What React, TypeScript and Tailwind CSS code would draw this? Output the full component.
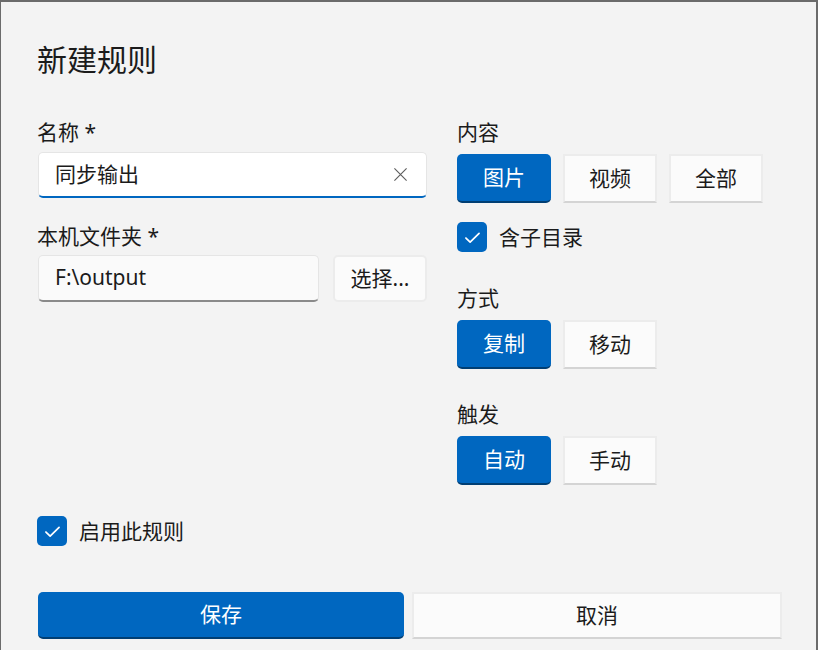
import { useState } from "react";

const font = "font-['Segoe_UI','Noto_Sans','Noto_Sans_CJK_SC',sans-serif]";

function Check() {
  return (
    <svg className="w-[21px] h-[21px]" viewBox="0 0 16 16" fill="none" stroke="white" strokeWidth={1.3}>
      <path strokeLinecap="round" strokeLinejoin="round" d="M3 8.4l3.2 3.1L13 4.9" />
    </svg>
  );
}

function CheckBox({ label, checked, onToggle }: { label: string; checked: boolean; onToggle: () => void }) {
  return (
    <button onClick={onToggle} className="flex items-center gap-3 text-left">
      <span
        className={`w-[30px] h-[30px] rounded-[5px] flex items-center justify-center ${
          checked ? "bg-[#0067c0]" : "bg-white border border-[#8a8a8a]"
        }`}
      >
        {checked && <Check />}
      </span>
      <span className="text-[21px] leading-[30px] text-[#1b1b1b]">{label}</span>
    </button>
  );
}

function Segment({ items, value, onChange }: { items: string[]; value: string; onChange: (v: string) => void }) {
  return (
    <div className="flex gap-[12px]">
      {items.map((it) =>
        it === value ? (
          <button
            key={it}
            onClick={() => onChange(it)}
            className="w-[94px] h-[49px] rounded-[5px] bg-[#0067c0] border-b-2 border-[#003e73] text-white text-[21px]"
          >
            {it}
          </button>
        ) : (
          <button
            key={it}
            onClick={() => onChange(it)}
            className="w-[94px] h-[49px] bg-[#fbfbfb] border-2 border-[#ececec] border-b-[#d4d4d4] text-[#1b1b1b] text-[21px]"
          >
            {it}
          </button>
        )
      )}
    </div>
  );
}

export default function App() {
  const [name, setName] = useState("同步输出");
  const [content, setContent] = useState("图片");
  const [mode, setMode] = useState("复制");
  const [trigger, setTrigger] = useState("自动");
  const [sub, setSub] = useState(true);
  const [enabled, setEnabled] = useState(true);

  return (
    <div
      className={`${font} w-[818px] h-[650px] overflow-hidden bg-[#f3f3f3] border-t-2 border-l border-r-2 border-[#6b6b6b] text-[#1b1b1b] pl-[37px] pr-[34px] pt-[38px]`}
    >
      {/* Title */}
      <h1 className="text-[30px] leading-[40px] font-normal -ml-px">新建规则</h1>

      <div className="mt-[38px] flex gap-[30px]">
        {/* Left column */}
        <div className="w-[389px] flex flex-col">
          <p className="text-[21px] leading-[28px] mb-[6px] -ml-px">名称 *</p>
          <div className="h-[46px] flex items-center bg-white border border-[#e5e5e5] border-b-2 border-b-[#0067c0] rounded-[5px] pl-[16px] pr-[18px]">
            <input
              value={name}
              onChange={(e) => setName(e.target.value)}
              className="flex-1 bg-transparent outline-none text-[21px] text-[#1b1b1b]"
            />
            <button onClick={() => setName("")} className="text-[#5d5d5d]">
              <svg className="w-[15px] h-[15px]" viewBox="0 0 16 16" fill="none" stroke="currentColor" strokeWidth={1.2}>
                <path d="M1.5 1.5l13 13M14.5 1.5l-13 13" />
              </svg>
            </button>
          </div>

          <p className="text-[21px] leading-[28px] mt-[24px] mb-[5px] -ml-px">本机文件夹 *</p>
          <div className="flex gap-[14px]">
            <div className="w-[281px] h-[47px] flex items-center bg-[#fafafa] border border-[#e5e5e5] border-b-2 border-b-[#8a8a8a] rounded-[5px] pl-[16px] text-[21px]">
              F:\output
            </div>
            <button className="flex-1 h-[47px] bg-[#fbfbfb] border-2 border-[#ececec] rounded-[5px] text-[21px]">
              选择...
            </button>
          </div>
        </div>

        {/* Right column */}
        <div className="flex-1 flex flex-col">
          <p className="text-[21px] leading-[28px] mb-[8px]">内容</p>
          <Segment items={["图片", "视频", "全部"]} value={content} onChange={setContent} />
          <div className="mt-[19px]">
            <CheckBox label="含子目录" checked={sub} onToggle={() => setSub(!sub)} />
          </div>

          <p className="text-[21px] leading-[28px] mt-[32px] mb-[8px]">方式</p>
          <Segment items={["复制", "移动"]} value={mode} onChange={setMode} />

          <p className="text-[21px] leading-[28px] mt-[31px] mb-[8px]">触发</p>
          <Segment items={["自动", "手动"]} value={trigger} onChange={setTrigger} />
        </div>
      </div>

      <div className="mt-[31px] -ml-px">
        <CheckBox label="启用此规则" checked={enabled} onToggle={() => setEnabled(!enabled)} />
      </div>

      {/* Footer */}
      <div className="mt-[46px] flex gap-[8px]">
        <button className="flex-1 h-[47px] rounded-[5px] bg-[#0067c0] border-b-2 border-[#003e73] text-white text-[21px]">
          保存
        </button>
        <button className="flex-1 h-[47px] bg-[#fbfbfb] border-2 border-[#ececec] border-b-[#d4d4d4] text-[21px]">
          取消
        </button>
      </div>
    </div>
  );
}
